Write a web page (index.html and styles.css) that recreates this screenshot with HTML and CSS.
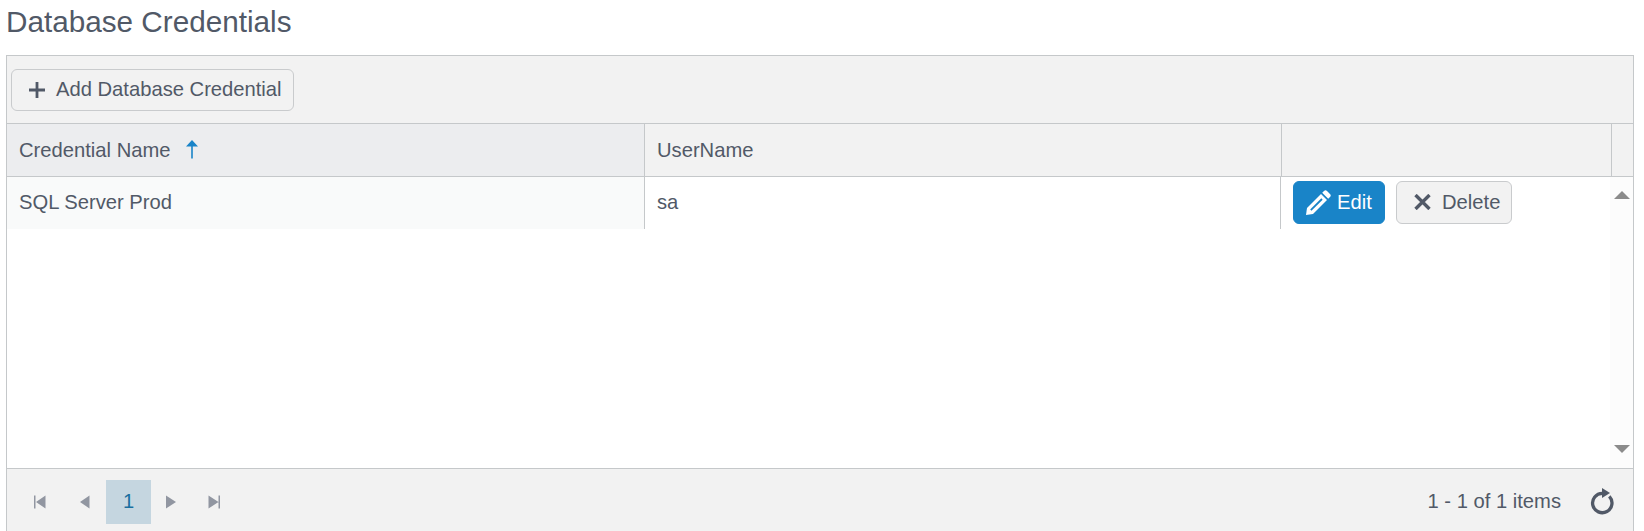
FILE: index.html
```
<!DOCTYPE html>
<html lang="en">
<head>
<meta charset="utf-8">
<title>Database Credentials</title>
<link rel="stylesheet" href="styles.css">
</head>
<body>
<h1 class="title">Database Credentials</h1>
<main class="grid">
  <div class="toolbar">
    <button class="btn btn-add"><svg width="16" height="16" viewBox="0 0 16 16"><path d="M8 0v16M0 8h16" stroke="currentColor" stroke-width="2.800"/></svg><span>Add Database Credential</span></button>
  </div>
  <div class="row head">
    <div class="cell sorted"><span>Credential Name</span><svg class="sort" width="12" height="19" viewBox="0 0 12 19"><path d="M0 6.500 6 0l6 6.500H6.800V18.500H5.200V6.500z" fill="#1984c8"/></svg></div>
    <div class="cell"><span>UserName</span></div>
    <div class="cell"></div>
    <div class="cell filler"></div>
  </div>
  <div class="body">
    <div class="content">
      <div class="row data">
        <div class="cell sorted"><span>SQL Server Prod</span></div>
        <div class="cell"><span>sa</span></div>
        <div class="cell actions">
          <button class="btn btn-edit"><svg width="25" height="25" viewBox="0 0 25 25"><path d="M0 25 1 18 15 4 21 10 7 24z" fill="#fff"/><path d="m16.200 2.800 1.800-1.800q1.500-1.500 3 0l3 3q1.500 1.500 0 3l-1.800 1.800z" fill="#fff"/><path d="M4.800 20.200 16 9" stroke="#1984c8" stroke-width="1.800"/></svg><span>Edit</span></button>
          <button class="btn btn-delete"><svg width="17" height="16" viewBox="0 0 17 16"><path d="m1.500 1 14 14m0-14-14 14" stroke="currentColor" stroke-width="3.400"/></svg><span>Delete</span></button>
        </div>
      </div>
    </div>
    <div class="scrollbar">
      <svg width="16" height="8" viewBox="0 0 16 8"><path d="M0 8 8 0l8 8z" fill="#8b8b8b"/></svg>
      <svg width="16" height="8" viewBox="0 0 16 8"><path d="M0 0h16L8 8z" fill="#8b8b8b"/></svg>
    </div>
  </div>
  <div class="pager">
    <svg class="nav" width="45" height="44" viewBox="0 0 45 44"><path d="M17 15.500h1.500v13H17zM28.500 15.500v13L19 22z" fill="currentColor"/></svg>
    <svg class="nav" width="44" height="44" viewBox="0 0 44 44"><path d="M27.500 15.500v13L18 22z" fill="currentColor"/></svg>
    <span class="page">1</span>
    <svg class="nav" width="42" height="44" viewBox="0 0 42 44"><path d="M15 15.500v13L25 22z" fill="currentColor"/></svg>
    <svg class="nav" width="45" height="44" viewBox="0 0 45 44"><path d="M15.500 15.500v13L25.500 22zM25.500 15.500H27v13h-1.500z" fill="currentColor"/></svg>
    <span class="info">1 - 1 of 1 items</span>
    <svg class="refresh" width="24" height="27" viewBox="0 0 24 27"><path d="M19.300 8.300A9.700 9.700 0 1 1 12.500 5.300" fill="none" stroke="currentColor" stroke-width="3.300"/><path d="M12 0v10l8-5z" fill="currentColor"/></svg>
  </div>
</main>
</body>
</html>
```
FILE: styles.css
```
* { box-sizing: border-box; }
body {
  margin: 0;
  height: 531px;
  overflow: hidden;
  background: #fff;
  color: #515967;
  font: 20.200px/24px "Liberation Sans", Arial, sans-serif;
}
svg { display: block; flex: none; }
.title {
  margin: 0;
  padding: 5px 0 0 6px;
  height: 55px;
  font-size: 29.700px;
  line-height: 34px;
  font-weight: 400;
}
.grid {
  width: 1628px;
  height: 490px;
  margin-left: 6px;
  border: 1px solid #c5c8ca;
  background: #fff;
}
.toolbar {
  height: 68px;
  padding: 13px 4px;
  background: #f2f2f2;
  border-bottom: 1px solid #c5c8ca;
}
.btn {
  display: flex;
  align-items: center;
  border: 1px solid #c9cbcd;
  border-radius: 6px;
  background: #f2f2f2;
  color: inherit;
  font: inherit;
  white-space: nowrap;
}
.btn span { padding-bottom: 2px; }
.btn-add { width: 283px; height: 42px; padding: 0 0 0 17px; gap: 11px; }
.row { display: grid; }
.head {
  grid-template-columns: 638px 637px 330px 1fr;
  height: 53px;
  background: #f2f2f2;
  border-bottom: 1px solid #c5c8ca;
}
.cell {
  display: flex;
  align-items: center;
  padding: 0 12px;
  border-right: 1px solid #c5c8ca;
}
.cell.filler { border-right: 0; }
.head .sorted { background: #ecedef; }
.sort { margin-left: 16px; margin-bottom: 2px; }
.body { display: flex; height: 291px; }
.content { flex: 1; }
.data { grid-template-columns: 638px 636px 1fr; height: 52px; }
.data .sorted { background: #f9fafa; }
.data .cell { padding-bottom: 2px; }
.cell.actions { gap: 11px; border-right: 0; }
.btn-edit {
  width: 92px;
  height: 43px;
  padding: 0 0 0 12px;
  gap: 6px;
  background: #1984c8;
  border-color: #1984c8;
  color: #fff;
}
.btn-delete { width: 116px; height: 43px; padding: 0 0 0 17px; gap: 11px; }
.btn-edit span, .btn-delete span { padding-bottom: 1px; }
.scrollbar {
  display: flex;
  flex-direction: column;
  justify-content: space-between;
  align-items: flex-start;
  width: 23px;
  padding: 14px 0 15px 4px;
  background: #fcfcfc;
}
.pager {
  display: flex;
  align-items: center;
  height: 77px;
  padding: 0 19px 11px 10px;
  background: #f2f2f2;
  border-top: 1px solid #c5c8ca;
}
.nav { color: #9196a1; }
.page {
  width: 45px;
  height: 44px;
  line-height: 43px;
  text-align: center;
  background: #c5d6e0;
  color: #1a6f9f;
}
.info { margin-left: auto; margin-right: 29px; padding-bottom: 1px; }
```
